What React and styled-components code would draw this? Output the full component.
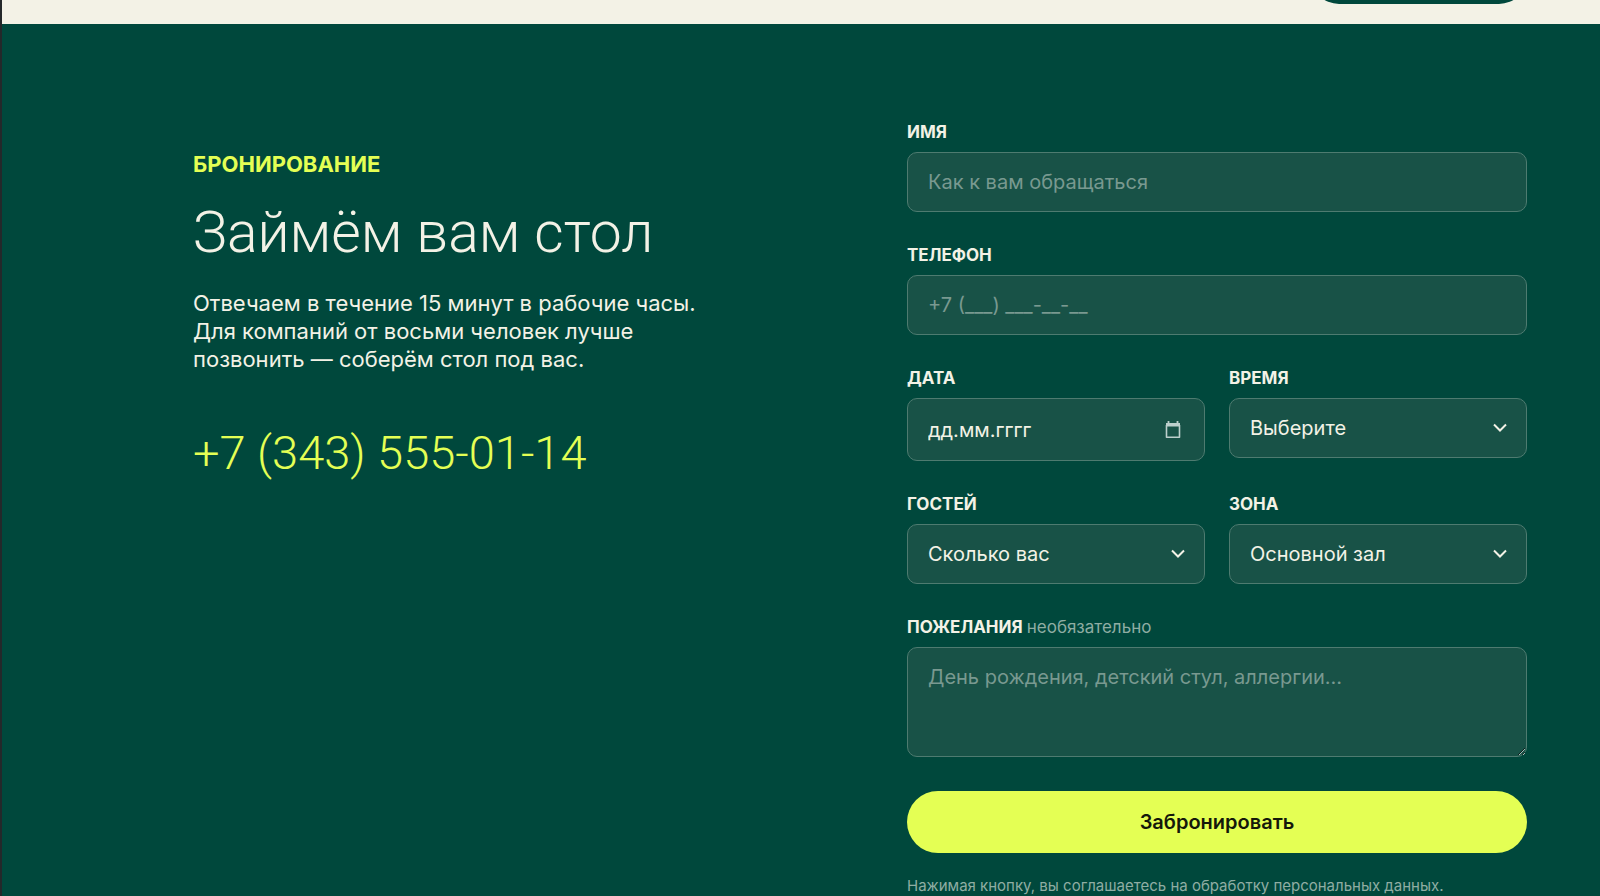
import React from "react";
import styled, { createGlobalStyle, css } from "styled-components";

const color = {
  green: "#00483c",
  cream: "#f3f2e6",
  lime: "#e4ff54",
  ink: "#14180a",
  field: "#185247",
  fieldLine: "#4e7b70",
  muted: "#799990",
  soft: "#8fada3",
};

const displayFont = `Roboto, Inter, sans-serif`;

const GlobalStyle = createGlobalStyle`
  *, *::before, *::after { box-sizing: border-box; }
  body {
    margin: 0;
    background: ${color.green};
    color: ${color.cream};
    font-family: Inter, "Noto Sans", sans-serif;
    -webkit-font-smoothing: antialiased;
  }
  button, input, select, textarea { font: inherit; }
`;

const Page = styled.div`
  display: flex;
  flex-direction: column;
  min-height: 100vh;
  border-left: 2px solid #24282a;
`;

const TopBar = styled.header`
  display: flex;
  justify-content: flex-end;
  align-items: flex-end;
  height: 24px;
  padding: 0 73px 20px;
  overflow: hidden;
  background: ${color.cream};
`;

const TopButton = styled.button`
  width: 216px;
  height: 56px;
  flex: none;
  border: 0;
  border-radius: 28px;
  background: ${color.green};
`;

const Booking = styled.main`
  flex: 1;
  display: grid;
  grid-template-columns: minmax(0, 1fr) minmax(0, 1fr);
  gap: 94px;
  padding: 96px 73px 0 191px;
  background: ${color.green};
`;

const Intro = styled.section`
  display: flex;
  flex-direction: column;
  align-items: flex-start;
  padding-top: 29px;
`;

const Eyebrow = styled.p`
  margin: 0;
  color: ${color.lime};
  font-size: 22px;
  font-weight: 700;
  line-height: 30px;
  text-transform: uppercase;
`;

const Title = styled.h1`
  margin: 21px 0 23px;
  font-family: ${displayFont};
  font-size: 57px;
  font-weight: 300;
  line-height: 66px;
`;

const Lead = styled.p`
  max-width: 540px;
  margin: 0;
  font-size: 22px;
  line-height: 28px;
`;

const Phone = styled.a`
  margin-top: 48px;
  color: ${color.lime};
  font-family: ${displayFont};
  font-size: 47px;
  font-weight: 300;
  line-height: 64px;
  text-decoration: none;
`;

const Form = styled.form`
  display: flex;
  flex-direction: column;
  gap: 31px;
`;

const Row = styled.div`
  display: grid;
  grid-template-columns: repeat(2, minmax(0, 1fr));
  align-items: start;
  gap: 24px;
`;

const Field = styled.div`
  display: flex;
  flex-direction: column;
  gap: 8px;
`;

const Label = styled.label`
  font-size: 17px;
  font-weight: 700;
  line-height: 24px;
  text-transform: uppercase;
`;

const Optional = styled.span`
  color: ${color.soft};
  font-weight: 400;
  text-transform: none;
`;

const control = css`
  display: block;
  width: 100%;
  height: 60px;
  margin: 0;
  padding: 0 20px;
  border: 1px solid ${color.fieldLine};
  border-radius: 10px;
  outline: 0;
  background: ${color.field};
  color: ${color.cream};
  font-size: 20px;
  line-height: 26px;
  appearance: none;

  &::placeholder {
    color: ${color.muted};
    opacity: 1;
  }
  &:focus-visible { border-color: ${color.lime}; }
`;

const Input = styled.input`
  ${control}
`;

const DateInput = styled.input`
  ${control}
  height: 63px;
  &::placeholder { color: ${color.cream}; }
`;

const Select = styled.select`
  ${control}
`;

const TextArea = styled.textarea`
  ${control}
  height: 110px;
  padding: 16px 20px;
  resize: vertical;
`;

const WithIcon = styled.div`
  display: grid;
  align-items: center;
  > * { grid-area: 1 / 1; }
`;

const Icon = styled.svg`
  justify-self: end;
  margin-right: ${(p) => p.$inset}px;
  pointer-events: none;
`;

const Actions = styled.div`
  display: flex;
  flex-direction: column;
  gap: 23px;
  padding-top: 3px;
`;

const Submit = styled.button`
  height: 62px;
  border: 0;
  border-radius: 31px;
  background: ${color.lime};
  color: ${color.ink};
  font-size: 20px;
  font-weight: 600;
  cursor: pointer;
`;

const Note = styled.p`
  margin: 0;
  color: ${color.soft};
  font-size: 15px;
  line-height: 20px;
`;

function Chevron() {
  return (
    <Icon $inset={20} width="14" height="10" viewBox="0 0 14 10" fill="none" aria-hidden="true">
      <path d="M1 1.5 7 7.5l6-6" stroke={color.cream} strokeWidth="2" />
    </Icon>
  );
}

function CalendarIcon() {
  return (
    <Icon $inset={24} width="16" height="18" viewBox="0 0 16 18" fill="none" aria-hidden="true">
      <path d="M1.5 4v12.2h13V4" stroke="#bccfcc" strokeWidth="1.6" strokeLinejoin="round" />
      <path d="M1 2h14v3.6H1zM2.6 0h1.8v3H2.6zM11.6 0h1.8v3h-1.8z" fill="#bccfcc" />
    </Icon>
  );
}

function SelectField({ id, label, options }) {
  return (
    <Field>
      <Label htmlFor={id}>{label}</Label>
      <WithIcon>
        <Select id={id} name={id}>
          {options.map((o) => (
            <option key={o}>{o}</option>
          ))}
        </Select>
        <Chevron />
      </WithIcon>
    </Field>
  );
}

export default function App() {
  return (
    <Page>
      <GlobalStyle />
      <TopBar>
        <TopButton type="button" aria-label="Меню" />
      </TopBar>
      <Booking>
        <Intro>
          <Eyebrow>Бронирование</Eyebrow>
          <Title>Займём вам стол</Title>
          <Lead>
            Отвечаем в течение 15 минут в рабочие часы.
            <br />
            Для компаний от восьми человек лучше
            <br />
            позвонить — соберём стол под вас.
          </Lead>
          <Phone href="tel:+73435550114">+7 (343) 555-01-14</Phone>
        </Intro>
        <Form onSubmit={(e) => e.preventDefault()}>
          <Field>
            <Label htmlFor="name">Имя</Label>
            <Input id="name" name="name" placeholder="Как к вам обращаться" />
          </Field>
          <Field>
            <Label htmlFor="phone">Телефон</Label>
            <Input id="phone" name="phone" type="tel" placeholder="+7 (___) ___-__-__" />
          </Field>
          <Row>
            <Field>
              <Label htmlFor="date">Дата</Label>
              <WithIcon>
                <DateInput id="date" name="date" inputMode="numeric" placeholder="дд.мм.гггг" />
                <CalendarIcon />
              </WithIcon>
            </Field>
            <SelectField id="time" label="Время" options={["Выберите"]} />
          </Row>
          <Row>
            <SelectField id="guests" label="Гостей" options={["Сколько вас"]} />
            <SelectField id="zone" label="Зона" options={["Основной зал"]} />
          </Row>
          <Field>
            <Label htmlFor="wishes">
              Пожелания <Optional>необязательно</Optional>
            </Label>
            <TextArea id="wishes" name="wishes" placeholder="День рождения, детский стул, аллергии…" />
          </Field>
          <Actions>
            <Submit type="submit">Забронировать</Submit>
            <Note>Нажимая кнопку, вы соглашаетесь на обработку персональных данных.</Note>
          </Actions>
        </Form>
      </Booking>
    </Page>
  );
}
